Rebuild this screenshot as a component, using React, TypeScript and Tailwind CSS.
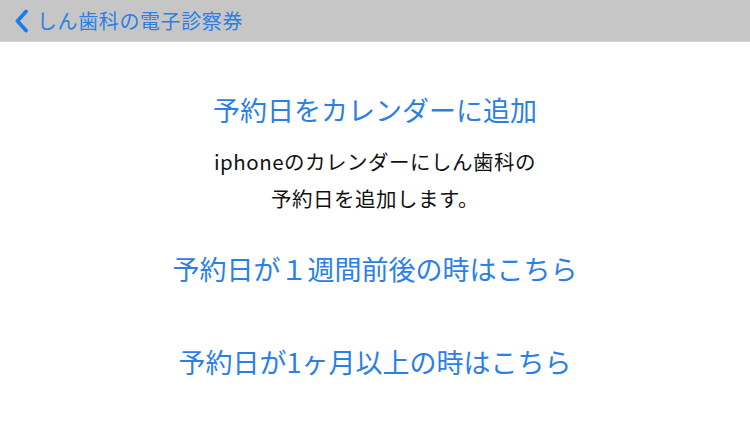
import React from "react";

const font = { fontFamily: '"Noto Sans CJK JP", "Noto Sans", sans-serif' };

const Header = () => {
  return (
    <div className="h-[42px] w-full bg-[#c6c6c6] border-b border-[#d4d4d4] flex items-center pl-[14px]">
      <svg width="15" height="24" viewBox="0 0 15 24" className="mr-[8px]">
        <path d="M12 2.5 L3.5 12 L12 21.5" fill="none" stroke="#1b7cf0" strokeWidth="3.8" strokeLinecap="round" strokeLinejoin="round" />
      </svg>
      <span className="text-[20px] text-[#2b7fe6] leading-none tracking-[0.6px]">しん歯科の電子診察券</span>
    </div>
  );
};

export default function App() {
  return (
    <div className="w-[750px] h-[422px] bg-white overflow-hidden" style={font}>
      <Header />
      <div className="flex flex-col items-center">
        <div className="mt-[49px] text-[27px] leading-[38px] text-[#2a80e8]">予約日をカレンダーに追加</div>
        <div className="mt-[14px] text-[20.5px] leading-[37px] tracking-[0.5px] text-[#111] text-center">
          <div>iphoneのカレンダーにしん歯科の</div>
          <div>予約日を追加します。</div>
        </div>
        <div className="mt-[33px] text-[27px] leading-[38px] text-[#2a80e8]">予約日が１週間前後の時はこちら</div>
        <div className="mt-[55px] text-[27px] leading-[38px] text-[#2a80e8]">予約日が1ヶ月以上の時はこちら</div>
      </div>
    </div>
  );
}
